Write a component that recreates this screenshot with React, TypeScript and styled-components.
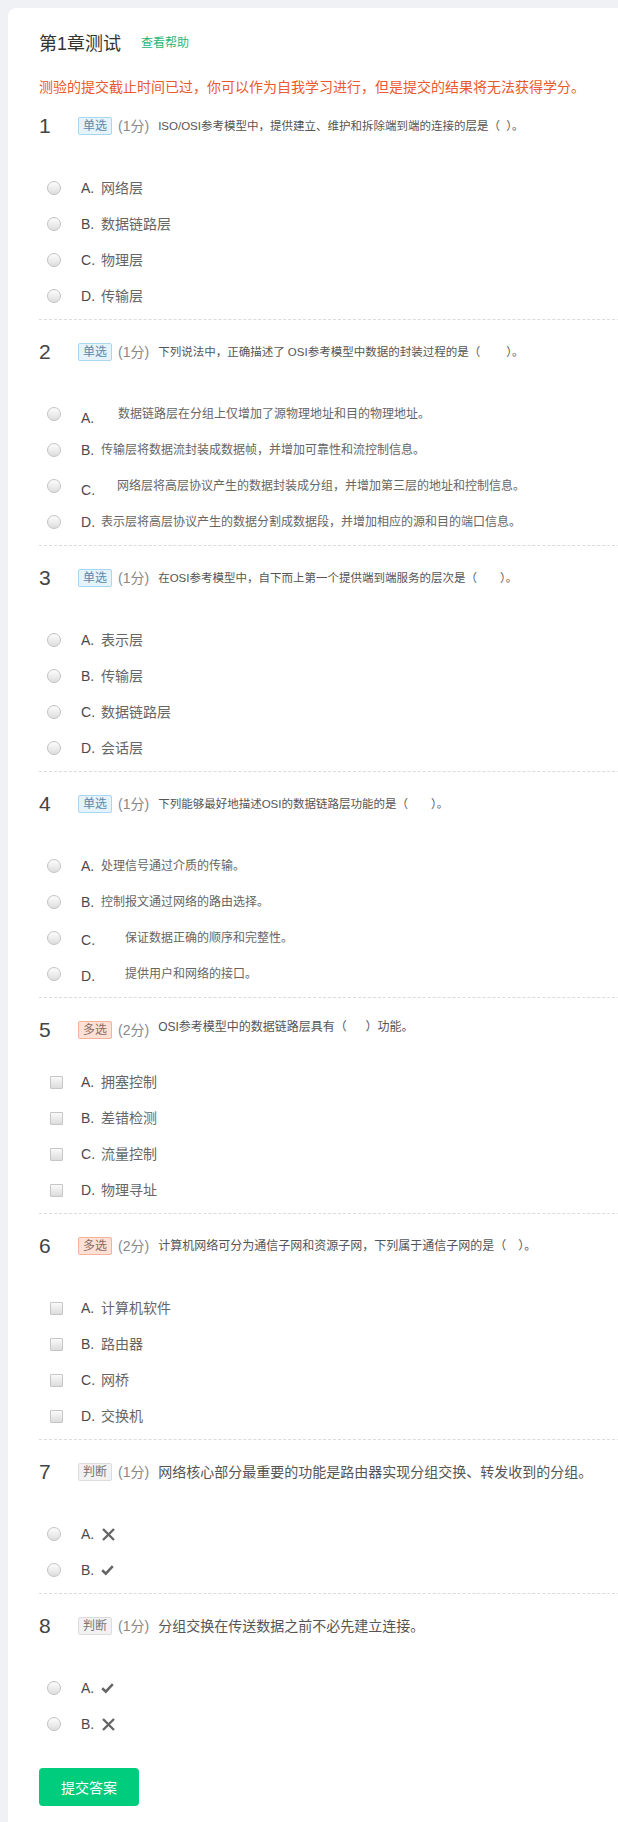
import React from "react";
import styled, { createGlobalStyle } from "styled-components";

const GlobalStyle = createGlobalStyle`
  html, body {
    margin: 0;
    padding: 0;
    overflow: hidden;
    background: #eff1f5;
  }
  body {
    font-family: "Liberation Sans", "Noto Sans CJK SC", sans-serif;
  }
  * { box-sizing: border-box; }
`;

type Kind = "single" | "multi" | "judge";

interface Opt {
  letter: string;
  text?: string;
  icon?: "x" | "check";
  indent?: number;
  drop?: number;
}

interface Question {
  kind: Kind;
  score: number;
  stem: string;
  stemSize?: number;
  stemRaise?: number;
  optSize?: number;
  gap?: number;
  options: Opt[];
}

const questions: Question[] = [
  {
    kind: "single",
    score: 1,
    stem: "ISO/OSI参考模型中，提供建立、维护和拆除端到端的连接的层是（\u00a0\u00a0）。",
    stemSize: 11.5,
    options: [
      { letter: "A", text: "网络层" },
      { letter: "B", text: "数据链路层" },
      { letter: "C", text: "物理层" },
      { letter: "D", text: "传输层" },
    ],
  },
  {
    kind: "single",
    score: 1,
    stem: "下列说法中，正确描述了 OSI参考模型中数据的封装过程的是（　　\u00a0）。",
    stemSize: 11.5,
    optSize: 12,
    options: [
      { letter: "A", text: "数据链路层在分组上仅增加了源物理地址和目的物理地址。", indent: 17, drop: 4 },
      { letter: "B", text: "传输层将数据流封装成数据帧，并增加可靠性和流控制信息。" },
      { letter: "C", text: "网络层将高层协议产生的数据封装成分组，并增加第三层的地址和控制信息。", indent: 16, drop: 4 },
      { letter: "D", text: "表示层将高层协议产生的数据分割成数据段，并增加相应的源和目的端口信息。" },
    ],
  },
  {
    kind: "single",
    score: 1,
    stem: "在OSI参考模型中，自下而上第一个提供端到端服务的层次是（　　）。",
    stemSize: 11.5,
    options: [
      { letter: "A", text: "表示层" },
      { letter: "B", text: "传输层" },
      { letter: "C", text: "数据链路层" },
      { letter: "D", text: "会话层" },
    ],
  },
  {
    kind: "single",
    score: 1,
    stem: "下列能够最好地描述OSI的数据链路层功能的是（　　）。",
    stemSize: 11.5,
    optSize: 12,
    options: [
      { letter: "A", text: "处理信号通过介质的传输。" },
      { letter: "B", text: "控制报文通过网络的路由选择。" },
      { letter: "C", text: "保证数据正确的顺序和完整性。", indent: 24, drop: 2 },
      { letter: "D", text: "提供用户和网络的接口。", indent: 24, drop: 2 },
    ],
  },
  {
    kind: "multi",
    score: 2,
    stem: "OSI参考模型中的数据链路层具有（　\u00a0\u00a0）功能。",
    stemRaise: 3,
    gap: 22,
    options: [
      { letter: "A", text: "拥塞控制" },
      { letter: "B", text: "差错检测" },
      { letter: "C", text: "流量控制" },
      { letter: "D", text: "物理寻址" },
    ],
  },
  {
    kind: "multi",
    score: 2,
    stem: "计算机网络可分为通信子网和资源子网，下列属于通信子网的是（　）。",
    options: [
      { letter: "A", text: "计算机软件" },
      { letter: "B", text: "路由器" },
      { letter: "C", text: "网桥" },
      { letter: "D", text: "交换机" },
    ],
  },
  {
    kind: "judge",
    score: 1,
    stem: "网络核心部分最重要的功能是路由器实现分组交换、转发收到的分组。",
    stemSize: 14,
    options: [
      { letter: "A", icon: "x" },
      { letter: "B", icon: "check" },
    ],
  },
  {
    kind: "judge",
    score: 1,
    stem: "分组交换在传送数据之前不必先建立连接。",
    stemSize: 14,
    options: [
      { letter: "A", icon: "check" },
      { letter: "B", icon: "x" },
    ],
  },
];

const tagLabel: Record<Kind, string> = { single: "单选", multi: "多选", judge: "判断" };
const tagColors: Record<Kind, { bg: string; border: string; color: string }> = {
  single: { bg: "#e4f3fc", border: "#a9d6f1", color: "#5d88aa" },
  multi: { bg: "#fde1d6", border: "#f3b29b", color: "#8a6a60" },
  judge: { bg: "#f2f2f2", border: "#dcdcdc", color: "#777" },
};

const Page = styled.div`
  width: 650px;
  padding: 8px 0 0 8px;
`;

const Card = styled.main`
  background: #fff;
  border-radius: 8px 0 0 0;
  padding: 24px 0 17px 31px;
  min-height: 1814px;
`;

const TitleRow = styled.div`
  display: flex;
  align-items: center;
  height: 24px;
`;

const Title = styled.h1`
  margin: 0;
  font-size: 18px;
  line-height: 24px;
  font-weight: normal;
  color: #333;
`;

const HelpLink = styled.a`
  margin-left: 20px;
  margin-top: -2px;
  font-size: 12px;
  line-height: 20px;
  color: #1db67a;
  text-decoration: none;
`;

const Warning = styled.p`
  margin: 21px 0 17px;
  font-size: 14px;
  line-height: 20px;
  color: #ea5a2c;
`;

const Block = styled.section`
  padding: 20px 0 5px;
  border-bottom: 1px dashed #dcdcdc;
  &:first-of-type {
    padding-top: 0;
  }
  &:last-of-type {
    border-bottom: none;
  }
`;

const Header = styled.div`
  display: flex;
  align-items: center;
  height: 24px;
  white-space: nowrap;
`;

const Num = styled.span`
  width: 39px;
  flex: none;
  font-family: "Liberation Sans", sans-serif;
  font-size: 21px;
  line-height: 24px;
  color: #444;
`;

const Tag = styled.span<{ $kind: Kind }>`
  flex: none;
  font-size: 12px;
  line-height: 16px;
  padding: 0 4px;
  border-radius: 2px;
  border: 1px solid ${(p) => tagColors[p.$kind].border};
  background: ${(p) => tagColors[p.$kind].bg};
  color: ${(p) => tagColors[p.$kind].color};
`;

const Score = styled.span`
  margin-left: 6px;
  font-size: 14px;
  line-height: 20px;
  color: #888;
`;

const Stem = styled.span<{ $size: number; $raise: number }>`
  margin-left: 9px;
  font-size: ${(p) => p.$size}px;
  line-height: 20px;
  color: #555;
  margin-bottom: ${(p) => p.$raise * 2}px;
`;

const Options = styled.div<{ $gap: number }>`
  margin-top: ${(p) => p.$gap}px;
`;

const Row = styled.label`
  display: flex;
  align-items: center;
  height: 36px;
  padding-left: 8px;
  white-space: nowrap;
`;

const Radio = styled.span`
  flex: none;
  width: 14px;
  height: 14px;
  margin-right: 20px;
  border-radius: 50%;
  border: 1px solid #c2c2c2;
  background: linear-gradient(#fdfdfd, #dedede);
`;

const Check = styled.span`
  flex: none;
  width: 13px;
  height: 13px;
  margin-left: 3px;
  margin-right: 18px;
  border-radius: 1px;
  border: 1px solid #c6c6c6;
  background: linear-gradient(#fafafa, #dcdcdc);
`;

const Letter = styled.span<{ $drop: number }>`
  flex: none;
  width: 20px;
  font-size: 14px;
  line-height: 20px;
  color: #4a4a4a;
  margin-top: ${(p) => p.$drop * 2}px;
`;

const OptText = styled.span<{ $size: number; $indent: number }>`
  font-size: ${(p) => p.$size}px;
  line-height: 20px;
  color: #666;
  padding-left: ${(p) => p.$indent}px;
`;

const IconWrap = styled.span`
  display: flex;
  align-items: center;
  height: 20px;
  color: #666;
`;

const SubmitButton = styled.button`
  display: block;
  margin-top: 21px;
  width: 100px;
  height: 38px;
  border: none;
  border-radius: 4px;
  background: #00cc7e;
  color: #fff;
  font-family: "Liberation Sans", "Noto Sans CJK SC", sans-serif;
  font-size: 14px;
  cursor: pointer;
`;

const XIcon = () => (
  <svg width="15" height="15" viewBox="0 0 15 15">
    <path d="M2 2 L13 13 M13 2 L2 13" stroke="currentColor" strokeWidth="2.4" fill="none" />
  </svg>
);

const CheckIcon = () => (
  <svg width="13" height="12" viewBox="0 0 13 12">
    <path d="M1.2 6.2 L4.8 9.6 L11.8 2.2" stroke="currentColor" strokeWidth="2.6" fill="none" />
  </svg>
);

export default function App() {
  return (
    <Page>
      <GlobalStyle />
      <Card>
        <TitleRow>
          <Title>第1章测试</Title>
          <HelpLink href="#">查看帮助</HelpLink>
        </TitleRow>
        <Warning>测验的提交截止时间已过，你可以作为自我学习进行，但是提交的结果将无法获得学分。</Warning>
        {questions.map((q, i) => (
          <Block key={i}>
            <Header>
              <Num>{i + 1}</Num>
              <Tag $kind={q.kind}>{tagLabel[q.kind]}</Tag>
              <Score>({q.score}分)</Score>
              <Stem $size={q.stemSize ?? 12} $raise={q.stemRaise ?? 0}>
                {q.stem}
              </Stem>
            </Header>
            <Options $gap={q.gap ?? 32}>
              {q.options.map((o) => (
                <Row key={o.letter}>
                  {q.kind === "multi" ? <Check /> : <Radio />}
                  <Letter $drop={o.drop ?? 0}>{o.letter}.</Letter>
                  {o.icon ? (
                    <IconWrap>{o.icon === "x" ? <XIcon /> : <CheckIcon />}</IconWrap>
                  ) : (
                    <OptText $size={q.optSize ?? 14} $indent={o.indent ?? 0}>
                      {o.text}
                    </OptText>
                  )}
                </Row>
              ))}
            </Options>
          </Block>
        ))}
        <SubmitButton type="button">提交答案</SubmitButton>
      </Card>
    </Page>
  );
}
